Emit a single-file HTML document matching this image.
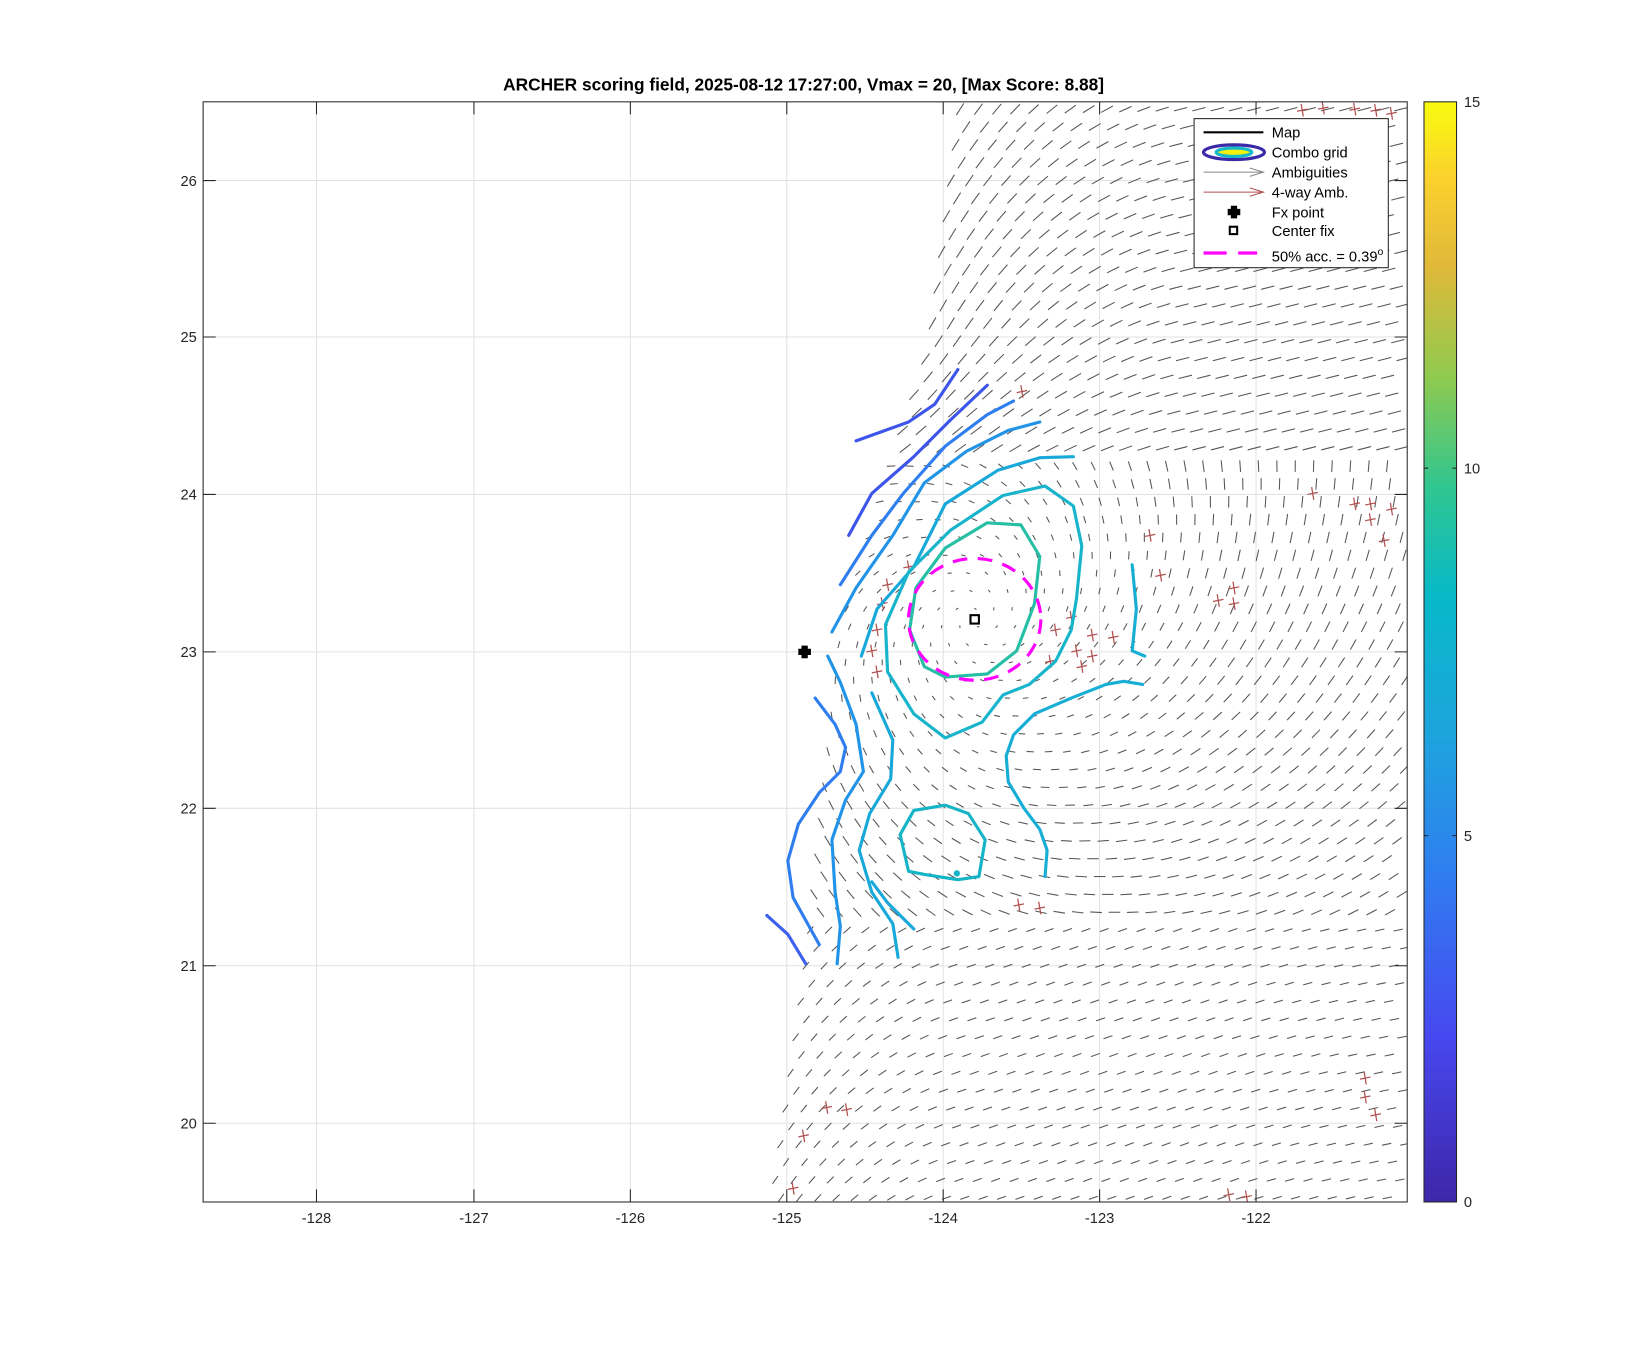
<!DOCTYPE html>
<html><head><meta charset="utf-8"><style>
html,body{margin:0;padding:0;background:#fff;}
svg{display:block;}
text{font-family:"Liberation Sans",sans-serif;}
</style></head><body>
<svg id="s" width="1646" height="1350" viewBox="0 0 1567 1286" xmlns="http://www.w3.org/2000/svg">
<defs>
<linearGradient id="parula" x1="0" y1="1" x2="0" y2="0">
<stop offset="0" stop-color="#3e26a8"/>
<stop offset="0.15" stop-color="#4748f0"/>
<stop offset="0.3" stop-color="#2f7ef0"/>
<stop offset="0.42" stop-color="#1ea3de"/>
<stop offset="0.55" stop-color="#07b9c8"/>
<stop offset="0.65" stop-color="#30c690"/>
<stop offset="0.75" stop-color="#8fca4f"/>
<stop offset="0.85" stop-color="#e0b939"/>
<stop offset="0.93" stop-color="#fbd12d"/>
<stop offset="1" stop-color="#f9fb0e"/>
</linearGradient>
<clipPath id="ax"><rect x="193" y="97" width="1147" height="1048"/></clipPath>
</defs>
<text x="765" y="86" text-anchor="middle" font-size="16.5" font-weight="bold">ARCHER scoring field, 2025-08-12 17:27:00, Vmax = 20, [Max Score: 8.88]</text>
<g stroke="#e2e2e2" stroke-width="1">
<line x1="301" y1="97" x2="301" y2="1145"/><line x1="451" y1="97" x2="451" y2="1145"/><line x1="600" y1="97" x2="600" y2="1145"/><line x1="749" y1="97" x2="749" y2="1145"/><line x1="898" y1="97" x2="898" y2="1145"/><line x1="1047" y1="97" x2="1047" y2="1145"/><line x1="1196" y1="97" x2="1196" y2="1145"/>
<line x1="193" y1="172" x2="1340" y2="172"/><line x1="193" y1="321" x2="1340" y2="321"/><line x1="193" y1="471" x2="1340" y2="471"/><line x1="193" y1="621" x2="1340" y2="621"/><line x1="193" y1="770" x2="1340" y2="770"/><line x1="193" y1="920" x2="1340" y2="920"/><line x1="193" y1="1070" x2="1340" y2="1070"/>
</g>
<g id="barbs" clip-path="url(#ax)" stroke="#555" stroke-width="1"></g>
<g id="reds" clip-path="url(#ax)" stroke="#b05050" stroke-width="1.2"></g>
<g fill="none" stroke-width="3" stroke-linejoin="round" stroke-linecap="round" clip-path="url(#ax)">
<path stroke="#3d55ea" d="M815,420 L865,402 L890,385 L912,352"/>
<path stroke="#3d55ea" d="M808,510 L830,470 L870,435 L905,400 L940,367"/>
<path stroke="#3d60ee" d="M730,872 L750,890 L767,918"/>
<path stroke="#2f7ef0" d="M800,557 L830,510 L860,470 L900,425 L940,395 L965,382"/>
<path stroke="#2f7ef0" d="M776,665 L795,690 L805,712 L800,735 L780,755 L760,785 L750,820 L755,855 L770,882 L780,900"/>
<path stroke="#2294e8" d="M792,602 L815,560 L850,510 L880,460 L920,430 L960,410 L990,402"/>
<path stroke="#2294e8" d="M788,625 L800,650 L815,690 L822,735 L805,762 L792,800 L795,850 L800,882 L797,918"/>
<path stroke="#19a8da" d="M820,625 L835,580 L870,540 L900,480 L950,448 L990,436 L1022,435"/>
<path stroke="#19a8da" d="M830,660 L850,705 L848,742 L828,775 L818,810 L830,850 L850,880 L855,912"/>
<path stroke="#19a8da" d="M870,885 L845,860 L830,840"/>
<path stroke="#17aed6" d="M1088,652 L1070,649 L1053,652 L1020,665 L985,680 L965,700 L958,720 L960,745 L975,770 L990,790 L997,810 L995,835"/>
<path stroke="#17aed6" d="M1078,538 L1082,580 L1078,620 L1090,625"/>
<path stroke="#17b4cc" d="M900,703 L870,680 L845,640 L843,595 L865,545 L905,505 L955,472 L995,463 L1022,482 L1030,520 L1025,570 L1020,600 L1005,630 L980,652 L955,662 L935,688 L900,703 Z"/>
<path stroke="#27bea6" d="M880,635 L866,600 L872,560 L900,522 L940,498 L972,500 L990,530 L985,575 L968,620 L940,642 L900,645 Z"/>
<path stroke="#15b4c6" d="M865,830 L857,795 L870,772 L900,767 L922,775 L938,800 L932,835 L912,838 L880,833 Z"/>
</g>
<circle cx="911" cy="832" r="3" fill="#15b4c6"/>
<ellipse cx="928" cy="590" rx="63" ry="58" fill="none" stroke="#ff00ff" stroke-width="3" stroke-dasharray="14,10"/>
<rect x="924" y="586" width="8" height="8" fill="none" stroke="#000" stroke-width="2"/>
<path d="M763,615 h6 v3 h3 v6 h-3 v3 h-6 v-3 h-3 v-6 h3z" fill="#000"/>
<rect x="193" y="97" width="1147" height="1048" fill="none" stroke="#262626" stroke-width="1"/>
<g stroke="#262626" stroke-width="1">
<path d="M301,1145v-12M451,1145v-12M600,1145v-12M749,1145v-12M898,1145v-12M1047,1145v-12M1196,1145v-12"/>
<path d="M301,97v12M451,97v12M600,97v12M749,97v12M898,97v12M1047,97v12M1196,97v12"/>
<path d="M193,172h12M193,321h12M193,471h12M193,621h12M193,770h12M193,920h12M193,1070h12"/>
<path d="M1340,172h-12M1340,321h-12M1340,471h-12M1340,621h-12M1340,770h-12M1340,920h-12M1340,1070h-12"/>
</g>
<g font-size="14" fill="#262626" text-anchor="middle">
<text x="301" y="1165">-128</text><text x="451" y="1165">-127</text><text x="600" y="1165">-126</text><text x="749" y="1165">-125</text><text x="898" y="1165">-124</text><text x="1047" y="1165">-123</text><text x="1196" y="1165">-122</text>
</g>
<g font-size="14" fill="#262626" text-anchor="end">
<text x="187" y="177">26</text><text x="187" y="326">25</text><text x="187" y="476">24</text><text x="187" y="626">23</text><text x="187" y="775">22</text><text x="187" y="925">21</text><text x="187" y="1075">20</text>
</g>
<rect x="1137" y="113" width="185" height="142" fill="#fff" stroke="#262626" stroke-width="1"/>
<g font-size="14" fill="#000">
<line x1="1146" y1="126" x2="1203" y2="126" stroke="#000" stroke-width="2"/><text x="1211" y="131">Map</text>
<ellipse cx="1175" cy="145" rx="29" ry="7" fill="#fff" stroke="#3a2aa8" stroke-width="3"/>
<ellipse cx="1175" cy="145" rx="17" ry="4" fill="#f2f20e" stroke="#15b8c8" stroke-width="3"/>
<text x="1211" y="150">Combo grid</text>
<path d="M1146,164 H1203 M1190,160 L1203,164 L1190,168" stroke="#888" fill="none"/><text x="1211" y="169">Ambiguities</text>
<path d="M1146,183 H1203 M1190,179 L1203,183 L1190,187" stroke="#b05050" fill="none"/><text x="1211" y="188">4-way Amb.</text>
<path d="M1172,196 h6 v3 h3 v6 h-3 v3 h-6 v-3 h-3 v-6 h3z" fill="#000"/><text x="1211" y="207">Fx point</text>
<rect x="1171" y="216" width="7" height="7" fill="none" stroke="#000" stroke-width="2"/><text x="1211" y="225">Center fix</text>
<path d="M1146,241 H1168 M1179,241 H1197" stroke="#ff00ff" stroke-width="3"/><text x="1211" y="249">50% acc. = 0.39<tspan dy="-6" font-size="10">o</tspan></text>
</g>
<rect x="1356" y="97" width="31" height="1048" fill="url(#parula)" stroke="#262626" stroke-width="1"/>
<g stroke="#262626"><path d="M1387,446h-4M1387,796h-4M1356,446h4M1356,796h4"/></g>
<g font-size="14" fill="#262626">
<text x="1394" y="102">15</text><text x="1394" y="451">10</text><text x="1394" y="801">5</text><text x="1394" y="1150">0</text>
</g>
</svg>
<script>
(function(){
var ns='http://www.w3.org/2000/svg';
var g=document.getElementById('barbs'),rg=document.getElementById('reds');
function leftEdge(y){
 var pts=[[97,915],[330,885],[470,840],[600,800],[900,770],[1145,735]];
 for(var i=0;i<pts.length-1;i++){if(y<=pts[i+1][0]){var t=(y-pts[i][0])/(pts[i+1][0]-pts[i][0]);return pts[i][1]+t*(pts[i+1][1]-pts[i][1]);}}
 return 735;}
function cl(v){return v<0?0:(v>1?1:v);}
function ln(par,x1,y1,x2,y2){var e=document.createElementNS(ns,'line');e.setAttribute('x1',x1.toFixed(1));e.setAttribute('y1',y1.toFixed(1));e.setAttribute('x2',x2.toFixed(1));e.setAttribute('y2',y2.toFixed(1));par.appendChild(e);}
var cx=928,cy=590;
var red=[[1240,105],[1260,103],[1290,104],[1310,105],[1325,108],[973,373],[1250,470],[1290,480],[1305,480],[1325,485],[1305,495],[1318,515],[1095,510],[1105,548],[1160,572],[1175,575],[1175,560],[1020,588],[1040,605],[1060,607],[1040,625],[1025,620],[1005,600],[1000,630],[1030,635],[845,557],[840,575],[835,600],[830,620],[835,640],[865,540],[970,862],[990,865],[1300,1027],[1300,1045],[1310,1062],[1170,1138],[1187,1140],[755,1132],[765,1082],[787,1055],[806,1057]];
var row=0;
for(var y=104;y<1145;y+=17){
 var le=leftEdge(y);
 for(var x=le+(row%2)*8;x<1338;x+=17.5){
  var dx=x-cx,dy=y-cy,r=Math.sqrt(dx*dx+dy*dy);
  var a,L;
  if(y<430){
   a=-0.25-0.8*cl((1120-x)/220)*cl((480-y)/250+0.3);
   L=6.5;
  } else if(y>880){
   a=-0.35-0.6*cl((900-x)/150)+0.15*cl((x-1150)/180);
   L=4.5;
  } else {
   a=Math.atan2(dy,dx)+Math.PI/2+0.45;
   L=Math.min(5.5,1+r/55);
  }
  var ax=Math.cos(a)*L,ay=Math.sin(a)*L;
  ln(g,x-ax,y-ay,x+ax,y+ay);
 }
 row++;
}
for(var i=0;i<red.length;i++){var p=red[i];ln(rg,p[0]-5,p[1]+1,p[0]+5,p[1]-1);ln(rg,p[0]-1,p[1]-6,p[0]+1,p[1]+6);}
})();
</script>
</body></html>
